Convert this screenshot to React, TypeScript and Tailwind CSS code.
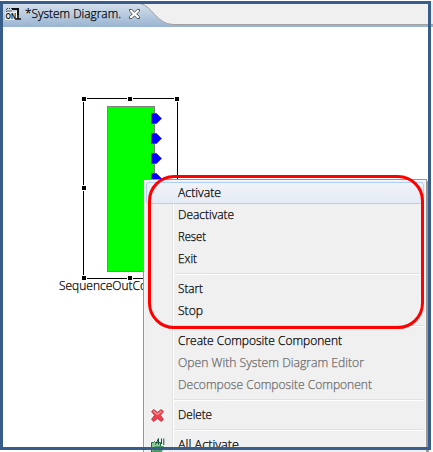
import React from "react";

const FONT = "font-['Open_Sans','Noto_Sans','Noto_Sans_CJK_KR',sans-serif]";

function DiagramIcon() {
  return (
    <svg width="17" height="16" viewBox="0 0 17 16" className="shrink-0">
      <path d="M1.5 6V2.5H7" fill="none" stroke="#444" strokeDasharray="1 1" />
      <path d="M2 4h5v2H2z" fill="#9a9a9a" />
      <path d="M0 6h11v8H0z" fill="#e6ebf1" />
      <path d="M7 3h6v6" fill="none" stroke="#111" strokeWidth="2" />
      <path d="M10 13h6M13 9v4" stroke="#111" strokeWidth="1.6" />
      <path d="M11.5 5v7" stroke="#fff" />
      <text x="0.5" y="13" fontSize="8.5" fontWeight="700" textLength="10.5" lengthAdjust="spacingAndGlyphs" fontFamily="Liberation Sans" fill="#111">ON</text>
    </svg>
  );
}

function CloseIcon() {
  return (
    <svg width="11" height="10" viewBox="0 0 11 10" className="shrink-0">
      <path d="M.5.5h2.3l2.7 2.7L8.2.5h2.3v1.7L7.7 4.9l2.8 2.8v1.8H8.2L5.5 6.8 2.8 9.5H.5V7.7l2.8-2.8L.5 2.2z" fill="#fff" stroke="#555" />
    </svg>
  );
}

function DeleteIcon() {
  return (
    <svg width="13" height="13" viewBox="0 0 13 13">
      <path d="M.6 2.6 2.8.6 6.5 3.4 10.2.6l2.2 2L9.4 6.3l3 4.1-2.2 2-3.7-3-3.7 3-2.2-2 3-4.1z" fill="#f0404f" stroke="#c03a45" />
      <path d="M2.5 2.3 6.5 5.5l4-3.2" fill="none" stroke="#ff9a9c" strokeWidth="1.2" />
    </svg>
  );
}

function ActivateAllIcon() {
  return (
    <svg width="15" height="15" viewBox="0 0 15 15">
      <path d="M.5 14V4.5h2l1-1 1 1h5V14z" fill="#8ccb95" stroke="#236b43" />
      <path d="m1 14 3-6h9l-2 6z" fill="#4f9b68" />
      <path d="m4.5 6.5 3-6v6M6 4.5h2M10.5.5V6M12.8.5V7" fill="none" stroke="#174d3b" />
    </svg>
  );
}

function Port({ y }: { y: number }) {
  return <path d={`M151.5 ${y + 0.5}h5l5 5-5 5h-5z`} fill="#00f" stroke="#f00" />;
}

const handles = [
  [82, 97], [128, 97], [175, 97],
  [82, 186], [175, 186],
  [82, 276], [128, 276], [175, 276],
];

function Diagram() {
  return (
    <svg width="433" height="452" viewBox="0 0 433 452" className="absolute left-0 top-0">
      <rect x="83.5" y="98.5" width="94" height="180" fill="none" stroke="#000" />
      <rect x="107.5" y="106.5" width="47" height="165" fill="#0f0" stroke="#808080" />
      {[113, 133, 153, 173].map((y) => <Port key={y} y={y} />)}
      {handles.map(([x, y]) => (
        <rect key={`${x}-${y}`} x={x - 0.5} y={y - 0.5} width="5" height="5" fill="#000" stroke="#fff" />
      ))}
    </svg>
  );
}

type Row = { label: string; width: number; disabled?: boolean; active?: boolean; icon?: React.ReactNode };

const groups: Row[][] = [
  [
    { label: "Activate", width: 43, active: true },
    { label: "Deactivate", width: 56 },
    { label: "Reset", width: 28 },
    { label: "Exit", width: 19 },
  ],
  [{ label: "Start", width: 25 }, { label: "Stop", width: 25 }],
  [
    { label: "Create Composite Component", width: 164 },
    { label: "Open With System Diagram Editor", width: 186, disabled: true },
    { label: "Decompose Composite Component", width: 194, disabled: true },
  ],
  [{ label: "Delete", width: 34, icon: <DeleteIcon /> }],
  [{ label: "All Activate", width: 61, icon: <ActivateAllIcon /> }],
];

/* Text fitted to a fixed advance width. */
function Label({ text, width, fill = "#000" }: { text: string; width: number; fill?: string }) {
  return (
    <svg width={width + 1} height="18" className="block shrink-0 overflow-visible">
      <text x="0" y="13" fontSize="12.5" textLength={width} lengthAdjust="spacingAndGlyphs" fill={fill} stroke={fill} strokeWidth="0.25">{text}</text>
    </svg>
  );
}

function Menu() {
  return (
    <div className="absolute left-[143px] top-[179px] w-[284px] border border-[#979797] bg-[#f5f5f5] p-px shadow-[2px_2px_1px_#999]">
      <div className="relative bg-[#f0f0f0] px-px pt-px">
        <div className="absolute inset-y-0 left-[27px] w-[2px] border-l border-r border-l-[#e2e3e3] border-r-white" />
        {groups.map((rows, i) => (
          <div key={i} className="relative">
            {i > 0 && (
              <div className="ml-[28px] h-2 pt-[3px]">
                <div className="h-[2px] border-b border-t border-b-white border-t-[#e0e0e0]" />
              </div>
            )}
            {rows.map((r) => (
              <div
                key={r.label}
                className={
                  r.active
                    ? "flex h-[22px] items-center rounded-[3px] border border-[#aecff7] bg-gradient-to-b from-[#f0f3f7]/90 to-[#e4ebf6]/90"
                    : "flex h-[22px] items-center border border-transparent"
                }
              >
                <div className="flex w-[31px] shrink-0 justify-start pl-[4px]">{r.icon}</div>
                <Label text={r.label} width={r.width} fill={r.disabled ? "#6d6d6d" : "#000"} />
              </div>
            ))}
          </div>
        ))}
      </div>
    </div>
  );
}

export default function App() {
  return (
    <div className={`relative h-[452px] w-[433px] overflow-hidden bg-white pt-px text-xs font-light ${FONT}`}>
      <div className="relative h-[26px] border-b-2 border-[#99b4d1] bg-[#f0f0f0]">
        <svg width="433" height="26" className="absolute left-0 top-0">
          <defs>
            <linearGradient id="tab" x1="0" y1="0" x2="0" y2="1">
              <stop offset="0" stopColor="#d3dfeb" />
              <stop offset="1" stopColor="#99b4d1" />
            </linearGradient>
          </defs>
          <path d="M0 3H141C151 3 157 23.5 173 23.5V26H0z" fill="url(#tab)" />
          <path d="M141 3C151 4 157 23.5 173 23.5H433" fill="none" stroke="#a0a0a0" />
        </svg>
        <div className="relative flex h-[26px] items-center pl-[5px]">
          <DiagramIcon />
          <div className="flex items-center gap-[7px] pl-[3px]">
            <Label text="*System Diagram." width={96} />
            <CloseIcon />
          </div>
        </div>
      </div>
      <Diagram />
      <div className="absolute left-[59px] top-[277px]">
        <Label text="SequenceOutCo" width={88} />
      </div>
      <Menu />
      <div className="absolute left-[148px] top-[175px] h-[154px] w-[276px] rounded-[26px] border-[3px] border-[#f00]" />
      <div className="absolute left-0 top-px h-[449px] w-[431px] border-[3px] border-[#385d8a]" />
    </div>
  );
}
